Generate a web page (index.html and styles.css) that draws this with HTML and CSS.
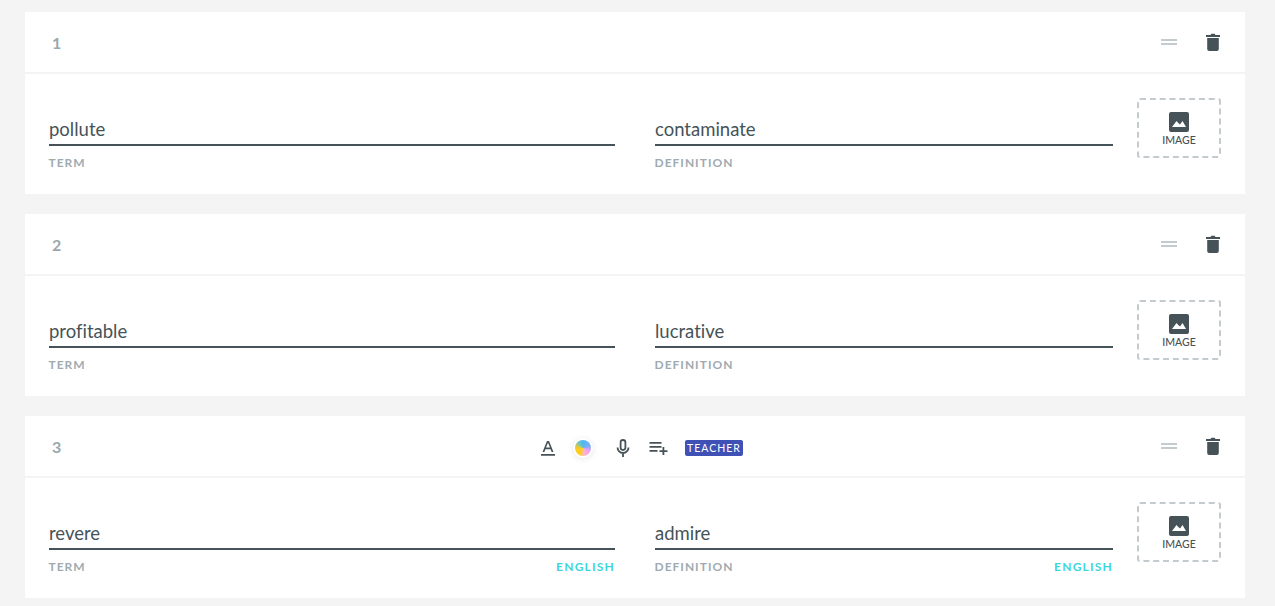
FILE: index.html
```html
<!DOCTYPE html>
<html lang="en">
<head>
<meta charset="utf-8">
<title>Flashcards</title>
<link rel="stylesheet" href="styles.css">
</head>
<body>
<svg class="defs" width="0" height="0" aria-hidden="true">
  <defs>
    <symbol id="trash" viewBox="0 0 14 18"><path d="M1.200 5h11.600v11a2 2 0 0 1-2 2H3.200a2 2 0 0 1-2-2zM0 2h4.500l.8-1.200h3.400l.8 1.200H14v2H0z"/></symbol>
    <symbol id="pic" viewBox="0 0 20 20"><path fill-rule="evenodd" d="M2 0h16a2 2 0 0 1 2 2v16a2 2 0 0 1-2 2H2a2 2 0 0 1-2-2V2a2 2 0 0 1 2-2zM3 15h14l-3.500-6-2.500 3.500-2-1.800-1.500-1.700z"/></symbol>
  </defs>
</svg>
<main class="list">
  <section class="card">
    <header class="card-head">
      <span class="num">1</span>
      <div class="actions">
        <span class="drag"></span>
        <svg class="trash"><use href="#trash"/></svg>
      </div>
    </header>
    <div class="card-body">
      <div class="field term"><div class="value">pollute</div><div class="meta"><span>TERM</span></div></div>
      <div class="field def"><div class="value">contaminate</div><div class="meta"><span>DEFINITION</span></div></div>
      <div class="image"><svg class="pic"><use href="#pic"/></svg><span>IMAGE</span></div>
    </div>
  </section>
  <section class="card">
    <header class="card-head">
      <span class="num">2</span>
      <div class="actions">
        <span class="drag"></span>
        <svg class="trash"><use href="#trash"/></svg>
      </div>
    </header>
    <div class="card-body">
      <div class="field term"><div class="value">profitable</div><div class="meta"><span>TERM</span></div></div>
      <div class="field def"><div class="value">lucrative</div><div class="meta"><span>DEFINITION</span></div></div>
      <div class="image"><svg class="pic"><use href="#pic"/></svg><span>IMAGE</span></div>
    </div>
  </section>
  <section class="card">
    <header class="card-head">
      <span class="num">3</span>
      <div class="toolbar">
        <svg class="tool-a" viewBox="0 0 14 16"><path d="M0 14h14v1.800H0zM6 1h2l4.500 11h-1.900l-1-2.700H4.400l-1 2.700H1.500zM5 7.600h4L7 2.800z"/></svg>
        <span class="swatch"></span>
        <svg class="tool-mic" viewBox="0 0 14 18"><rect x="4.600" y="1" width="4.800" height="10" rx="2.400" fill="none" stroke="currentColor" stroke-width="1.800"/><path d="M1.500 8.500a5.500 5.500 0 0 0 11 0M7 14v4" fill="none" stroke="currentColor" stroke-width="1.800"/></svg>
        <svg class="tool-list" viewBox="0 0 18 14"><path d="M0 1h12v1.700H0zM0 5h12v1.700H0zM0 9h8v1.700H0zM13 6h1.800v3.200H18V11h-3.200v3H13v-3h-3V9.200h3z"/></svg>
        <span class="badge">TEACHER</span>
      </div>
      <div class="actions">
        <span class="drag"></span>
        <svg class="trash"><use href="#trash"/></svg>
      </div>
    </header>
    <div class="card-body">
      <div class="field term"><div class="value">revere</div><div class="meta"><span>TERM</span><span class="lang">ENGLISH</span></div></div>
      <div class="field def"><div class="value">admire</div><div class="meta"><span>DEFINITION</span><span class="lang">ENGLISH</span></div></div>
      <div class="image"><svg class="pic"><use href="#pic"/></svg><span>IMAGE</span></div>
    </div>
  </section>
</main>
</body>
</html>
```
FILE: styles.css
```css
* { box-sizing: border-box; }
html, body { height: 100%; }
body {
  margin: 0;
  background: #f4f4f4;
  font-family: "Lato", "Liberation Sans", sans-serif;
  overflow: hidden;
}
.defs { position: absolute; }
.list {
  display: flex;
  flex-direction: column;
  gap: 20px;
  padding: 12px 30px 0 25px;
}
.card { background: #fff; height: 182px; }
.card-head {
  height: 62px;
  padding: 0 25px 0 27px;
  border-bottom: 2px solid #f4f4f4;
  display: flex;
  align-items: center;
  position: relative;
}
.num { font-size: 16px; font-weight: 700; color: #9aa8ab; }
.actions { margin-left: auto; display: flex; align-items: center; gap: 29px; }
.drag {
  width: 16px;
  height: 6px;
  border-top: 2px solid #c3cbce;
  border-bottom: 2px solid #c3cbce;
}
.trash { width: 14px; height: 18px; fill: #455358; display: block; }
.toolbar {
  position: absolute;
  left: 516px;
  top: 2px;
  height: 60px;
  display: flex;
  align-items: center;
  color: #455358;
  fill: #455358;
}
.tool-a { width: 14px; height: 16px; }
.swatch {
  width: 16px;
  height: 16px;
  margin-left: 20px;
  border-radius: 50%;
  background: conic-gradient(#4fb7f5 0deg, #7aaef5 70deg, #f7a0f0 120deg, #ffb5c5 170deg, #ffd21f 210deg, #ffc91f 270deg, #6cc8c0 320deg, #4fb7f5 360deg);
  box-shadow: 0 0 0 2px #fff, 0 1px 6px 2px rgba(0,0,0,.1);
}
.tool-mic { width: 14px; height: 18px; margin-left: 25px; }
.tool-list { width: 19px; height: 14px; margin-left: 19px; }
.badge {
  margin-left: 17px;
  height: 16px;
  width: 58px;
  background: #3f51b5;
  color: #fff;
  border-radius: 2px;
  font-size: 10.500px;
  font-weight: 400;
  line-height: 17px;
  letter-spacing: 1px;
  text-align: center;
}
.card-body {
  display: flex;
  padding: 24px 24px 0;
}
.field { padding-top: 21px; }
.term { width: 566px; margin-right: 40px; }
.def { width: 458px; margin-right: 24px; }
.value {
  height: 27px;
  font-family: "Lato", "Liberation Sans", sans-serif;
  font-size: 18.500px;
  font-variant-ligatures: none;
  line-height: 20px;
  color: #455358;
  border-bottom: 2px solid #455358;
}
.meta {
  display: flex;
  justify-content: space-between;
  margin-top: 9px;
  font-size: 12px;
  font-weight: 700;
  line-height: 15px;
  letter-spacing: 1px;
  color: #9fabb0;
}
.meta span:first-child { margin-left: -0.500px; }
.lang { color: #3ed6dc; letter-spacing: 1.200px; }
.image {
  width: 84px;
  height: 60px;
  border: 2px dashed #c3cbce;
  border-radius: 3px;
  display: flex;
  flex-direction: column;
  align-items: center;
  padding-top: 12px;
  font-size: 10.500px;
  font-weight: 500;
  line-height: 14px;
  color: #455358;
}
.pic { width: 20px; height: 20px; fill: #455358; display: block; margin-bottom: 1px; }
```
